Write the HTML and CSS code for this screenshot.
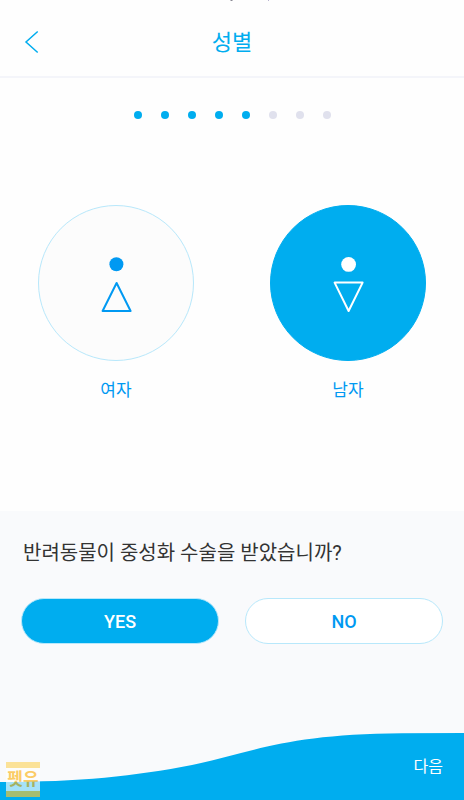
FILE: index.html
```html
<!DOCTYPE html>
<html lang="ko">
<head>
    <meta charset="UTF-8">
    <meta name="viewport" content="width=device-width, initial-scale=1.0">
    <title>성별</title>
    <link rel="stylesheet" href="styles.css">
</head>
<body>
    <header class="header">
        <svg class="status" width="42" height="2" viewBox="0 0 42 2" aria-hidden="true">
            <path d="M1 0h3l-1 1h-1z" fill="#8a8994"/>
            <path d="M39 0h1v1h-1z" fill="#b9b4d0"/>
        </svg>
        <button class="back" type="button" aria-label="뒤로">
            <svg width="16" height="24" viewBox="0 0 16 24">
                <path d="M13.7 1.5 L2 12 L13.7 22.5" fill="none" stroke="#00adef" stroke-width="1.5"/>
            </svg>
        </button>
        <h1>성별</h1>
    </header>

    <main>
        <div class="steps">
            <span class="dot on"></span>
            <span class="dot on"></span>
            <span class="dot on"></span>
            <span class="dot on"></span>
            <span class="dot on"></span>
            <span class="dot"></span>
            <span class="dot"></span>
            <span class="dot"></span>
        </div>

        <div class="genders" role="radiogroup" aria-label="성별">
            <label class="gender">
                <input type="radio" name="gender" value="female">
                <span class="circle">
                    <svg width="32" height="56" viewBox="0 0 32 56">
                        <circle cx="16.4" cy="9.2" r="7" fill="currentColor"/>
                        <path d="M16.6 28 L30.6 56 L2.6 56 Z" fill="none" stroke="currentColor" stroke-width="2" stroke-linejoin="round"/>
                    </svg>
                </span>
                <span class="name">여자</span>
            </label>
            <label class="gender">
                <input type="radio" name="gender" value="male" checked>
                <span class="circle">
                    <svg width="32" height="56" viewBox="0 0 32 56">
                        <circle cx="16.6" cy="9.4" r="7.4" fill="currentColor"/>
                        <path d="M2.6 27.6 L30.6 27.6 L16.6 56 Z" fill="none" stroke="currentColor" stroke-width="2" stroke-linejoin="round"/>
                    </svg>
                </span>
                <span class="name">남자</span>
            </label>
        </div>
    </main>

    <section class="panel">
        <h2>반려동물이 중성화 수술을 받았습니까?</h2>
        <div class="answers">
            <button class="answer selected" type="button">YES</button>
            <button class="answer" type="button">NO</button>
        </div>
        <footer class="footer">
            <svg class="wave" viewBox="0 0 464 68" preserveAspectRatio="none" aria-hidden="true">
                <path d="M0 50 C80 50 135 44 192 33 C250 21 285 2 402 1.3 L464 1 L464 68 L0 68 Z" fill="#00adef"/>
            </svg>
            <button class="next" type="button">다음</button>
            <div class="mark">펫유</div>
        </footer>
    </section>
</body>
</html>
```
FILE: styles.css
```css
* {
    box-sizing: border-box;
}

body {
    margin: 0;
    min-height: 100vh;
    display: flex;
    flex-direction: column;
    background-color: #fefefe;
    font-family: Roboto, "Noto Sans CJK KR", sans-serif;
    color: #333;
}

button {
    margin: 0;
    padding: 0;
    border: none;
    background: none;
    font-family: inherit;
    cursor: pointer;
}

svg {
    display: block;
    overflow: visible;
}

.header {
    position: relative;
    display: grid;
    grid-template-columns: 40px 1fr 40px;
    align-items: center;
    padding: 25px 12px 15px;
    border-bottom: 2px solid #f4f5fa;
}

.status {
    position: absolute;
    top: 0;
    left: 50%;
    margin-left: -3px;
}

.back {
    display: flex;
    justify-content: center;
    padding-bottom: 2px;
}

h1 {
    margin: 0;
    text-align: center;
    font-size: 22px;
    line-height: 36px;
    font-weight: normal;
    color: #00adef;
}

main {
    flex: 1;
}

.steps {
    display: flex;
    justify-content: center;
    gap: 19px;
    padding-top: 33px;
}

.dot {
    width: 8px;
    height: 8px;
    border-radius: 50%;
    background-color: #e0e1ed;
}

.dot.on {
    background-color: #00adef;
}

.genders {
    display: grid;
    grid-template-columns: 1fr 1fr;
    padding: 86px 0 32px;
}

.gender {
    position: relative;
    display: flex;
    flex-direction: column;
    align-items: center;
    gap: 17px;
    color: #0099f2;
    cursor: pointer;
}

.gender input {
    position: absolute;
    opacity: 0;
}

.circle {
    display: flex;
    justify-content: center;
    align-items: center;
    width: 156px;
    height: 156px;
    border: 1px solid #b8e8fb;
    border-radius: 50%;
    background-color: #fcfcfc;
}

.gender input:checked + .circle {
    border-color: #00adef;
    background-color: #00adef;
    color: #fff;
}

.name {
    font-size: 17px;
    line-height: 24px;
}

.panel {
    background-color: #f9fafc;
}

h2 {
    margin: 0;
    padding: 28px 23px 31px;
    font-size: 20px;
    line-height: 28px;
    font-weight: normal;
}

.answers {
    display: flex;
    gap: 26px;
    padding: 0 21px;
}

.answer {
    flex: 1;
    height: 46px;
    border: 1px solid #b8e8fb;
    border-radius: 23px;
    background-color: #fff;
    color: #0099f2;
    font-size: 18px;
    font-weight: 500;
}

.answer.selected {
    background-color: #00adef;
    color: #fff;
}

.footer {
    position: relative;
    display: flex;
    justify-content: flex-end;
    margin-top: 88px;
    padding: 23px 21px 21px;
}

.wave {
    position: absolute;
    left: 0;
    bottom: 0;
    width: 100%;
    height: 100%;
}

.next {
    position: relative;
    font-size: 16px;
    line-height: 24px;
    color: #fff;
}

.mark {
    position: absolute;
    left: 6px;
    bottom: 3px;
    width: 34px;
    border-top: 6px solid #fdd663;
    border-bottom: 6px solid #fdc72f;
    background-color: #fff;
    color: #fdb515;
    font-size: 17px;
    font-weight: bold;
    line-height: 23px;
    text-align: center;
    opacity: 0.65;
}
```
